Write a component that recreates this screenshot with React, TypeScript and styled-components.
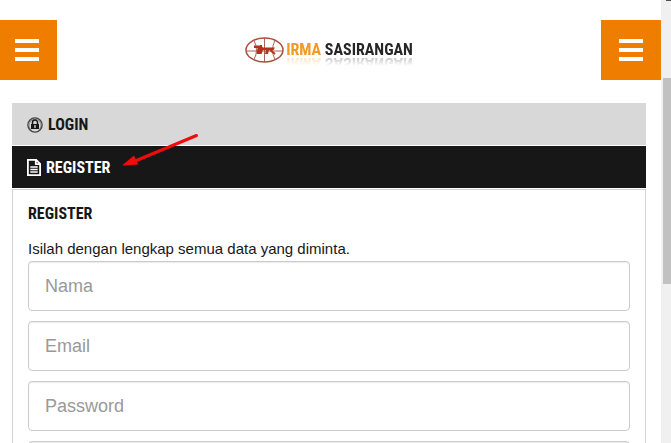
import React from "react";
import styled, { createGlobalStyle } from "styled-components";

const GlobalStyle = createGlobalStyle`
  *, *::before, *::after { box-sizing: border-box; }
  html, body { margin: 0; background: #fff; }
  body { font-family: "Liberation Sans", Arial, sans-serif; color: #171717; overflow: hidden; }
`;

const condensed = `"Liberation Sans Narrow", "Roboto Condensed", "Arial Narrow", sans-serif`;

const Window = styled.div`
  display: flex;
  height: 100vh;
  overflow: hidden;
`;

const Page = styled.div`
  flex: 1;
  min-width: 0;
`;

const Header = styled.header`
  display: flex;
  align-items: center;
  justify-content: space-between;
  padding-top: 20px;
`;

const MenuButton = styled.button<{ $wide?: boolean }>`
  display: flex;
  flex-direction: column;
  align-items: ${(p) => (p.$wide ? "center" : "flex-end")};
  justify-content: center;
  gap: 5px;
  width: ${(p) => (p.$wide ? 60 : 57)}px;
  height: 60px;
  padding: 0 ${(p) => (p.$wide ? 0 : 18)}px;
  border: 0;
  background: #ef7d00;
`;

const MenuBar = styled.span`
  width: 24px;
  height: 4px;
  background: #fff;
`;

const Logo = styled.a`
  display: flex;
  align-items: center;
  gap: 2px;
  text-decoration: none;
`;

const LogoName = styled.span`
  font: bold 16px/20px ${condensed};
  white-space: nowrap;
  color: #262626;
  -webkit-box-reflect: below -7px linear-gradient(transparent 35%, rgba(0, 0, 0, 0.4));
`;

const LogoAccent = styled.span`
  color: #f39a1f;
`;

const Content = styled.main`
  padding: 23px 15px 0 12px;
`;

const Tabs = styled.div`
  display: grid;
  gap: 1px;
`;

const Tab = styled.button<{ $active?: boolean }>`
  display: flex;
  align-items: center;
  gap: 5px;
  height: 42px;
  padding: 1px 15px 0;
  border: 0;
  background: ${(p) => (p.$active ? "#171717" : "#d8d8d8")};
  color: ${(p) => (p.$active ? "#fff" : "#171717")};
  font: bold 16px/20px ${condensed};
`;

const Panel = styled.form`
  display: grid;
  margin-top: 1px;
  padding: 14px 15px;
  border: 1px solid #d4d4d4;
`;

const Title = styled.h2`
  margin: 0 0 15px;
  font: bold 16px/20px ${condensed};
`;

const Intro = styled.p`
  margin: 0;
  padding-bottom: 3px;
  font-size: 15px;
  line-height: 19px;
`;

const Fields = styled.div`
  display: grid;
  gap: 10px;
`;

const Field = styled.input`
  width: 100%;
  height: 50px;
  padding: 0 16px;
  border: 1px solid #ccc;
  border-radius: 4px;
  background: #fff;
  box-shadow: inset 0 1px 1px rgba(0, 0, 0, 0.08);
  font: 18px/24px "Liberation Sans", Arial, sans-serif;
  color: #555;
  &::placeholder { color: #999; opacity: 1; }
`;

const ScrollTrack = styled.div`
  display: grid;
  grid-template-rows: 78px 206px;
  flex: none;
  width: 10px;
  padding-left: 2px;
  background: #f0f0f0;
`;

const ScrollCap = styled.div`
  justify-self: end;
  width: 5px;
  height: 1px;
  background: #505050;
`;

const ScrollThumb = styled.div`
  background: #c1c1c1;
`;

const Pointer = styled.svg`
  position: absolute;
  left: 120px;
  top: 130px;
  pointer-events: none;
`;

function LogoMark() {
  return (
    <svg width="39" height="26" viewBox="0 0 39 26" fill="none" stroke="#a8503f" aria-hidden="true">
      <ellipse cx="19.5" cy="13" rx="18.5" ry="12" strokeWidth="1.5" />
      <path d="M1 14h37M19.5 1v24M9 3.500q5 9.500 0 19M30 3.500q-5 9.500 0 19" strokeWidth=".9" />
      <path d="M9 8.500h7l2 2h12l-1.500 2.500H24l-1 4h-3l1-4h-3l-1.500 4H11.500l1-6H9Z" fill="#b3321f" stroke="none" />
      <path d="M25 13l5 4M16 8v8" stroke="#b3321f" strokeWidth="2" />
    </svg>
  );
}

function LockIcon() {
  return (
    <svg width="16" height="16" viewBox="0 0 16 16" fill="none" aria-hidden="true">
      <circle cx="8" cy="8" r="7.1" stroke="#444" strokeWidth="1.4" />
      <path d="M4 12.8A6 6 0 1 1 12 12.8" stroke="#777" strokeWidth=".8" />
      <path d="M5.5 7V5.6a2.5 2.5 0 0 1 5 0V7" stroke="#171717" strokeWidth="1.5" />
      <path d="M4 7h8v5H4z" fill="#171717" />
      <path d="M8 8v3" stroke="#d8d8d8" strokeWidth="1.3" />
    </svg>
  );
}

function DocumentIcon() {
  return (
    <svg width="14" height="17" viewBox="0 0 14 17" fill="none" stroke="#fff" aria-hidden="true">
      <path d="M.9.9h8.300l3.900 3.900v11.300H.9zM8.800 .8V5.200h4.300" strokeWidth="1.8" />
      <path d="M3.3 8h7.4M3.3 10.500h7.4M3.3 13h7.4" strokeWidth="1.4" />
    </svg>
  );
}

function MenuToggle({ label, wide }: { label: string; wide?: boolean }) {
  return (
    <MenuButton type="button" aria-label={label} $wide={wide}>
      <MenuBar />
      <MenuBar />
      <MenuBar />
    </MenuButton>
  );
}

const fields = [
  { label: "Nama", type: "text" },
  { label: "Email", type: "email" },
  { label: "Password", type: "password" },
];

export default function App() {
  return (
    <>
      <GlobalStyle />
      <Window>
        <Page>
          <Header>
            <MenuToggle label="Menu" />
            <Logo href="#" aria-label="Irma Sasirangan">
              <LogoMark />
              <LogoName>
                <LogoAccent>IRMA</LogoAccent> SASIRANGAN
              </LogoName>
            </Logo>
            <MenuToggle label="Akun" wide />
          </Header>
          <Content>
            <Tabs>
              <Tab type="button">
                <LockIcon />
                LOGIN
              </Tab>
              <Tab type="button" $active>
                <DocumentIcon />
                REGISTER
              </Tab>
            </Tabs>
            <Panel>
              <Title>REGISTER</Title>
              <Intro>Isilah dengan lengkap semua data yang diminta.</Intro>
              <Fields>
                {fields.map((f) => (
                  <Field key={f.label} type={f.type} placeholder={f.label} aria-label={f.label} />
                ))}
                <Field type="password" aria-label="Konfirmasi" />
              </Fields>
            </Panel>
          </Content>
        </Page>
        <ScrollTrack aria-hidden="true">
          <ScrollCap />
          <ScrollThumb />
        </ScrollTrack>
      </Window>
      <Pointer width="80" height="40" viewBox="0 0 80 40" aria-hidden="true">
        <path d="M76.500 5.500L14 31.500" stroke="#f00c0c" strokeWidth="3" strokeLinecap="round" />
        <path d="M2 35.500L14 25.500L18.500 34.500Z" fill="#f00c0c" />
      </Pointer>
    </>
  );
}
